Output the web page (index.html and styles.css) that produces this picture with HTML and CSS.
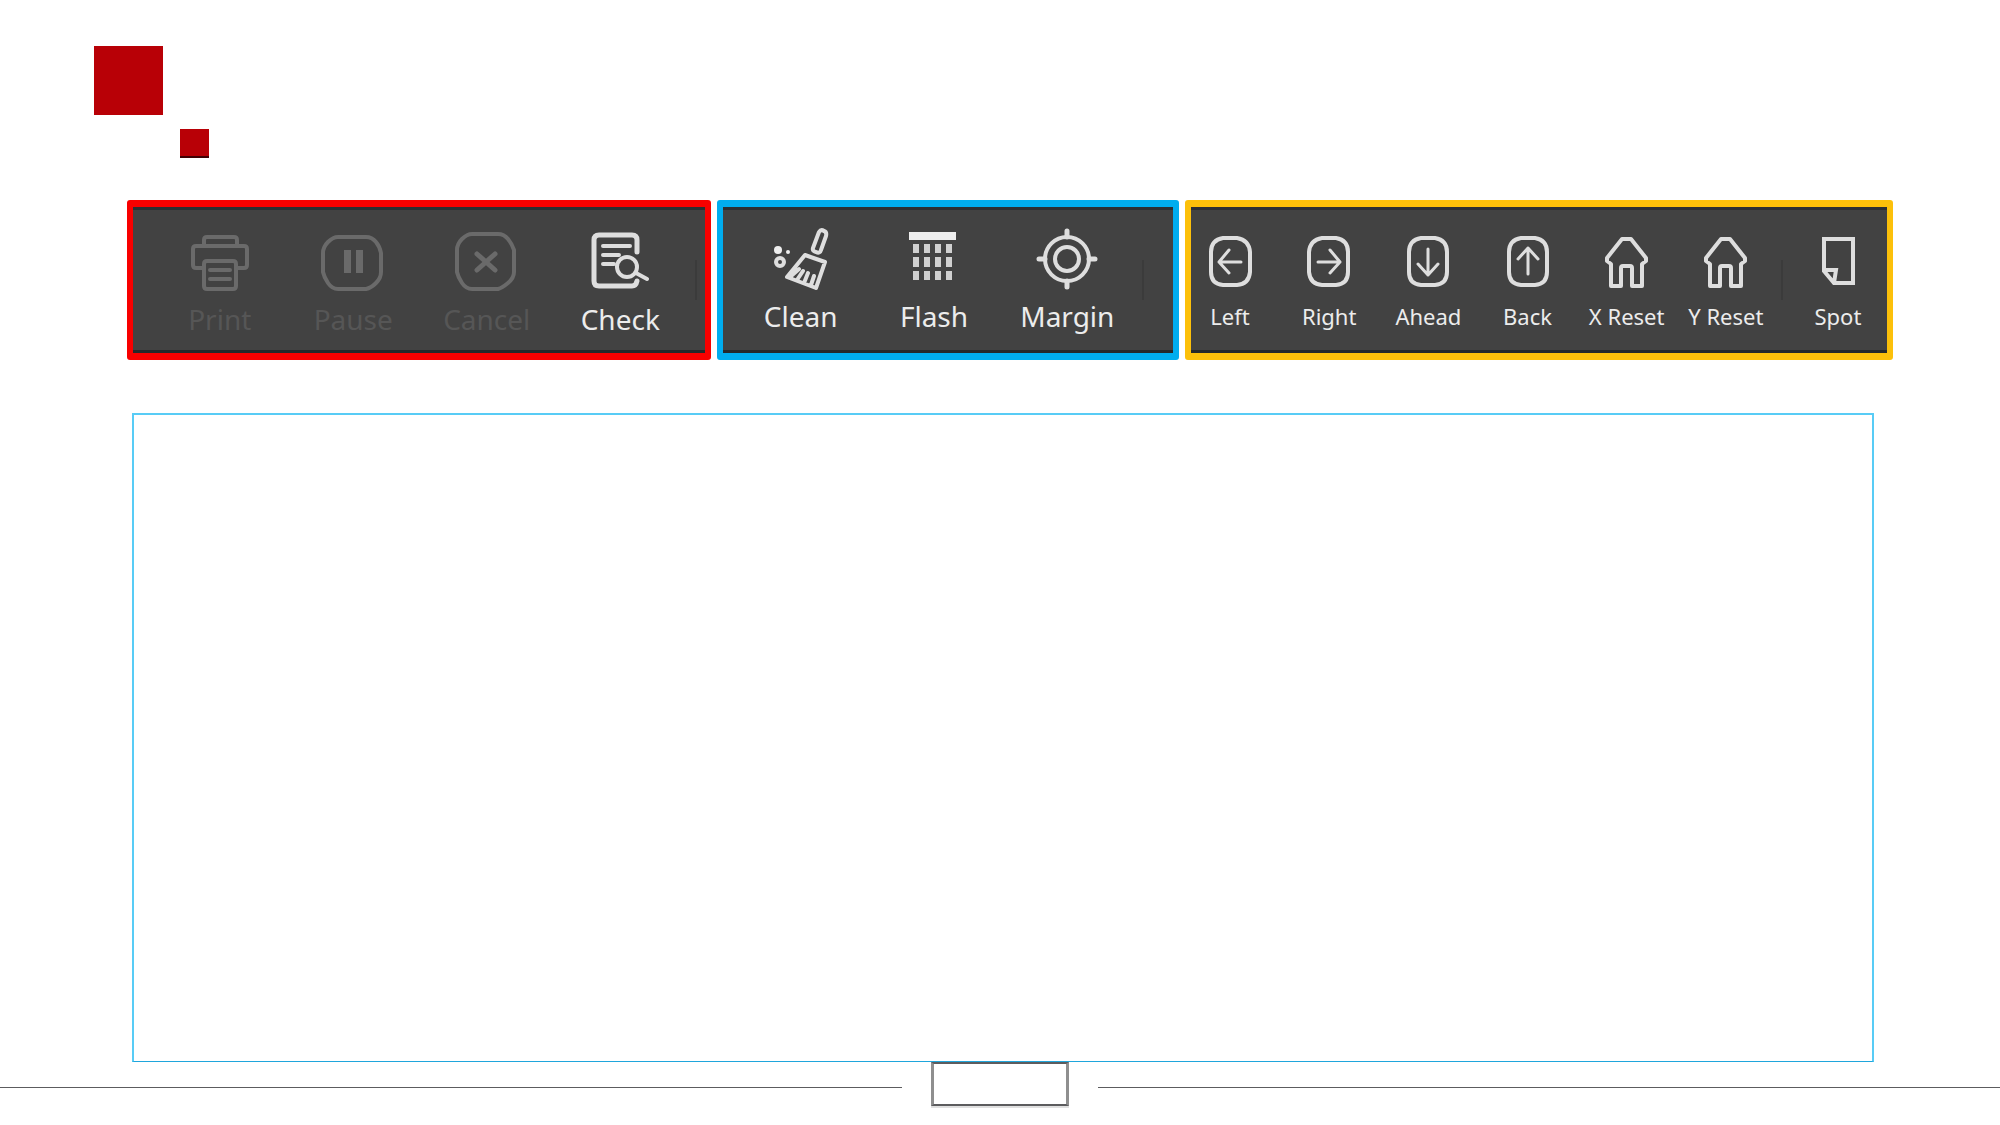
FILE: index.html
```html
<!DOCTYPE html>
<html lang="en">
<head>
<meta charset="utf-8">
<meta name="viewport" content="width=device-width, initial-scale=1">
<title>Toolbar overview</title>
<link rel="stylesheet" href="styles.css">
</head>
<body>
<header class="brand">
  <span class="brand-large"></span>
  <span class="brand-small"></span>
</header>

<main class="content">
  <div class="panels">
    <section class="panel panel-job" role="toolbar" aria-label="Print job">
      <div class="tools">
        <button class="tool" type="button" disabled>
          <svg class="icon" viewBox="0 0 64 64"><path d="M16 18V12q0-3 3-3h27q3 0 3 3v6M15 40H8q-3 0-3-3V21q0-3 3-3h48q3 0 3 3v16q0 3-3 3h-6M19 33h26q3 0 3 3v22q0 3-3 3H19q-3 0-3-3V36q0-3 3-3zM22 42h20M22 51h20"/></svg>
          <span>Print</span>
        </button>
        <button class="tool" type="button" disabled>
          <svg class="icon" viewBox="0 0 64 64"><path d="M17 9h28q6 0 10 5t5 11v19q0 6-5 11t-10 6H17q-6 0-10-6T2 44V25q0-6 5-11t10-5z"/><path class="fill" d="M23 22h7v23h-7zM35 22h7v23h-7z"/></svg>
          <span>Pause</span>
        </button>
        <button class="tool" type="button" disabled>
          <svg class="icon" viewBox="0 0 64 64"><path d="M17 6h26q6 0 10 5t6 11v22q0 6-6 11t-10 6H17q-6 0-10-6T2 44V22q0-6 5-11t10-5z"/><path class="thick" d="M22 26l18 16M40 26L22 42"/></svg>
          <span>Cancel</span>
        </button>
        <button class="tool" type="button">
          <svg class="icon" viewBox="0 0 64 64"><path class="thick" d="M49 24V12q0-5-5-5H11q-5 0-5 5v41q0 5 5 5h33q4 0 5-5"/><path d="M15 18h27M15 27h16M15 36h11M48 45l11 6"/><circle cx="39" cy="39" r="10"/></svg>
          <span>Check</span>
        </button>
      </div>
      <span class="divider"></span>
    </section>

    <section class="panel panel-head" role="toolbar" aria-label="Print head">
      <div class="tools">
        <button class="tool" type="button">
          <svg class="icon" viewBox="0 0 64 64"><path d="M50 4q2-3 5-1 3 1 2 5l-5 14q-1 4-5 2-4-1-3-4zM36 27l20 7-9 26-29-11zM21 49l9-8M28 52l6-9M35 55l4-10M42 57l3-9"/><circle class="fill" cx="9" cy="22" r="4"/><circle class="fill" cx="19" cy="24" r="2"/><circle cx="11" cy="34" r="4"/></svg>
          <span>Clean</span>
        </button>
        <button class="tool" type="button">
          <svg class="icon" viewBox="0 0 64 64"><path class="fill" d="M7 4h47v8H7z"/><path class="drops" d="M14 16v9M25 16v9M36 16v9M47 16v9M14 29v10M25 29v10M36 29v10M47 29v10M14 43v9M25 43v9M36 43v9M47 43v9"/></svg>
          <span>Flash</span>
        </button>
        <button class="tool" type="button">
          <svg class="icon" viewBox="0 0 64 64"><circle cx="32" cy="31" r="22"/><circle cx="32" cy="31" r="12"/><path class="thick" d="M32 3v6M32 53v6M4 31h6M54 31h6"/></svg>
          <span>Margin</span>
        </button>
      </div>
      <span class="divider"></span>
    </section>

    <section class="panel panel-move" role="toolbar" aria-label="Movement">
      <div class="tools">
        <button class="tool" type="button">
          <svg class="icon" viewBox="0 0 64 64"><path d="M25 10h14q12 2 13 14v20q-1 12-13 13H25q-12-1-12-13V24q0-12 12-14z"/><path class="medium" d="M43 34H21M31 22L21 34l10 11"/></svg>
          <span>Left</span>
        </button>
        <button class="tool" type="button">
          <svg class="icon" viewBox="0 0 64 64"><path d="M25 10h14q12 2 12 14v20q0 12-12 13H25q-12-1-13-13V24q1-12 13-14z"/><path class="medium" d="M21 34h22M33 22l10 12-10 11"/></svg>
          <span>Right</span>
        </button>
        <button class="tool" type="button">
          <svg class="icon" viewBox="0 0 64 64"><path d="M25 10h14q12 2 12 14v20q0 12-12 13H25q-12-1-12-13V24q0-12 12-14z"/><path class="medium" d="M32 21v26M22 36l10 11 10-11"/></svg>
          <span>Ahead</span>
        </button>
        <button class="tool" type="button">
          <svg class="icon" viewBox="0 0 64 64"><path d="M25 10h14q12 2 12 14v20q0 12-12 13H25q-12-1-12-13V24q0-12 12-14z"/><path class="medium" d="M32 46V20M22 31l10-11 10 11"/></svg>
          <span>Back</span>
        </button>
        <button class="tool" type="button">
          <svg class="icon" viewBox="0 0 64 64"><path d="M27 11h9l15 19v3l-4 3v22H37V40q0-2-2-2h-7q-2 0-2 2v18H16V36l-4-3v-3z"/></svg>
          <span>X Reset</span>
        </button>
        <button class="tool" type="button">
          <svg class="icon" viewBox="0 0 64 64"><path d="M27 11h9l15 19v3l-4 3v22H37V40q0-2-2-2h-7q-2 0-2 2v18H16V36l-4-3v-3z"/></svg>
          <span>Y Reset</span>
        </button>
      </div>
      <span class="divider"></span>
      <div class="tools tools-single">
        <button class="tool" type="button">
          <svg class="icon" viewBox="0 0 64 64"><path class="miter" d="M18 11h29v44H28L18 43zM18 42h12l-2 13"/></svg>
          <span>Spot</span>
        </button>
      </div>
    </section>
  </div>

  <section class="notes" aria-label="Notes"></section>
</main>

<footer class="footer">
  <span class="rule"></span>
  <span class="page-box"></span>
  <span class="rule"></span>
</footer>
</body>
</html>
```

FILE: styles.css
```css
* {
  box-sizing: border-box;
}

body {
  margin: 0;
  min-height: 100vh;
  display: flex;
  flex-direction: column;
  background: #fff;
  font-family: "Noto Sans", "Open Sans", sans-serif;
}

/* Two squares stepping down to the right */
.brand {
  display: grid;
  grid-template-columns: 69px 29px;
  grid-template-rows: 69px 29px;
  column-gap: 17px;
  row-gap: 14px;
  padding: 46px 94px 0;
}

.brand-large {
  background: #b80006;
}

.brand-small {
  grid-column: 2;
  grid-row: 2;
  background: #b80006;
  border-bottom: 2px solid #400003;
}

.content {
  flex: 1;
  display: flex;
  flex-direction: column;
  padding-top: 42px;
}

.panels {
  display: grid;
  grid-template-columns: 584fr 462fr 708fr;
  gap: 6px;
  margin: 0 107px 0 127px;
}

.panel {
  display: flex;
  align-items: flex-start;
  min-width: 0;
  height: 160px;
  padding-top: 21px;
  border: solid;
  border-width: 7px 6px;
  border-radius: 3px;
  background: #424242;
  box-shadow: inset 0 3px #2b2f33, inset 0 -3px #25292b;
}

.panel-job {
  border-color: #f80000;
  padding-left: 20px;
}

.panel-head {
  border-color: #00adef;
  padding-left: 11px;
  padding-right: 21px;
}

.panel-move {
  border-color: #fcc00a;
  padding-right: 10px;
}

.tools {
  flex: 573;
  min-width: 0;
  display: grid;
  grid-auto-flow: column;
  grid-auto-columns: minmax(0, 1fr);
}

.panel-move .tools {
  gap: 21px;
}

.panel-move .tools-single {
  flex: 78;
}

.tool {
  display: flex;
  flex-direction: column;
  align-items: center;
  padding: 0;
  border: 0;
  background: none;
  color: #ececec;
  font: 28px/36px "Noto Sans", "Open Sans", sans-serif;
  white-space: nowrap;
}

.tool:disabled {
  color: #565656;
}

.panel-job .tool {
  gap: 9px;
}

.panel-head .tool,
.panel-move .tool {
  gap: 6px;
}

.panel-move .tool {
  font-size: 22px;
}

.icon {
  width: 64px;
  height: 64px;
  fill: none;
  stroke: #dedede;
  stroke-width: 4;
  stroke-linecap: round;
  stroke-linejoin: round;
}

.tool:disabled .icon {
  stroke: #6a6a6a;
}

.icon .fill {
  fill: #eee;
  stroke: none;
}

.tool:disabled .fill {
  fill: #6a6a6a;
}

.icon .medium {
  stroke-width: 3;
}

.icon .thick {
  stroke-width: 5;
}

.icon .drops {
  stroke-width: 6;
  stroke-linecap: butt;
  stroke: #d0d0d0;
}

.icon .miter {
  stroke-linejoin: miter;
}

.divider {
  width: 2px;
  height: 40px;
  margin: 32px 8px 0;
  background: #3b3b3b;
}

.panel-move .divider {
  margin: 32px 16px 0;
}

.notes {
  flex: 1;
  margin: 53px 126px 0 132px;
  border: 2px solid #58ccf6;
  border-bottom: 1px solid #1fa6dc;
}

.footer {
  display: flex;
  align-items: flex-start;
  gap: 29px;
  height: 63px;
}

.page-box {
  width: 138px;
  height: 44px;
  border: 2px solid #5c5c5e;
  border-left: 3px solid #8f8f8f;
  border-right: 3px solid #8f8f8f;
  box-shadow: 0 2px #e0e0e0;
}

.rule {
  flex: 1;
  height: 1px;
  margin-top: 25px;
  background: #5c5c5e;
}
```
